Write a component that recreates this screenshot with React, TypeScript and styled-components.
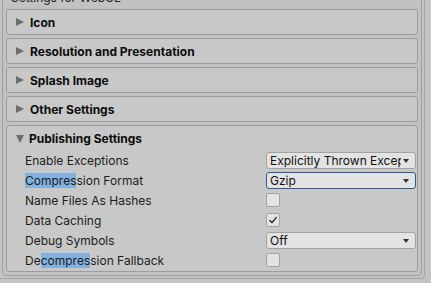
import React from "react";
import styled, { createGlobalStyle } from "styled-components";

const GlobalStyle = createGlobalStyle`
  html, body {
    margin: 0;
    padding: 0;
    background: #c3c3c3;
    overflow: hidden;
  }
  body {
    font-family: Inter, "Noto Sans", sans-serif;
    font-size: 12px;
    color: #111;
  }
`;

interface PanelProps {
  title: string;
  open?: boolean;
  children?: React.ReactNode;
}

const Panel: React.FC<PanelProps> = ({ title, open, children }) => (
  <PanelBox>
    <Header>
      <Arrow $open={open} />
      <HeaderTitle>{title}</HeaderTitle>
    </Header>
    {open && <Content>{children}</Content>}
  </PanelBox>
);

const Dropdown: React.FC<{ value: string; focused?: boolean }> = ({
  value,
  focused,
}) => (
  <Select $focused={focused}>
    <SelectValue>{value}</SelectValue>
    <SelectArrow />
  </Select>
);

const Checkbox: React.FC<{ checked?: boolean }> = ({ checked }) => (
  <CheckBox>
    {checked && (
      <svg width="10" height="10" viewBox="0 0 10 10">
        <path
          d="M1.5 5.2 L4 7.6 L8.6 2.2"
          fill="none"
          stroke="#1a1a1a"
          strokeWidth="1.3"
        />
      </svg>
    )}
  </CheckBox>
);

export default function App() {
  return (
    <>
      <GlobalStyle />
      <OuterFrame>
        <InspectorFrame>
          <Title>Settings for WebGL</Title>
          <PanelList>
            <Panel title="Icon" />
            <Panel title="Resolution and Presentation" />
            <Panel title="Splash Image" />
            <Panel title="Other Settings" />
            <Panel title="Publishing Settings" open>
              <Row>
                <Label>Enable Exceptions</Label>
                <Control>
                  <Dropdown value="Explicitly Thrown Exceptions Only" />
                </Control>
              </Row>
              <Row>
                <Label>
                  <Match>Compres</Match>sion Format
                </Label>
                <Control>
                  <Dropdown value="Gzip" focused />
                </Control>
              </Row>
              <Row>
                <Label>Name Files As Hashes</Label>
                <Control>
                  <Checkbox />
                </Control>
              </Row>
              <Row>
                <Label>Data Caching</Label>
                <Control>
                  <Checkbox checked />
                </Control>
              </Row>
              <Row>
                <Label>Debug Symbols</Label>
                <Control>
                  <Dropdown value="Off" />
                </Control>
              </Row>
              <Row>
                <Label>
                  De<Match>compres</Match>sion Fallback
                </Label>
                <Control>
                  <Checkbox />
                </Control>
              </Row>
            </Panel>
          </PanelList>
        </InspectorFrame>
      </OuterFrame>
    </>
  );
}

const OuterFrame = styled.div`
  margin: -15px 0 0 -4px;
  width: 429px;
  box-sizing: border-box;
  border: 1px solid #a6a6a6;
  border-radius: 4px;
  padding: 1px 2px 2px 5px;
`;

const InspectorFrame = styled.div`
  box-sizing: border-box;
  border: 1px solid #a0a0a0;
  border-radius: 4px;
  background: #c2c2c2;
  padding: 2px 3px 3px 3px;
`;

const Title = styled.div`
  height: 16px;
  line-height: 16px;
  padding-left: 5px;
  color: #222;
`;

const PanelList = styled.div`
  display: flex;
  flex-direction: column;
  gap: 3px;
  margin-top: 3px;
`;

const PanelBox = styled.div`
  border: 1px solid #9c9c9c;
  border-radius: 3px;
  background: #c8c8c8;
`;

const Header = styled.div`
  height: 24px;
  display: flex;
  align-items: center;
  padding-left: 9px;
  gap: 5px;
`;

const Arrow = styled.span<{ $open?: boolean }>`
  width: 0;
  height: 0;
  ${(p) =>
    p.$open
      ? `
    border-left: 4.5px solid transparent;
    border-right: 4.5px solid transparent;
    border-top: 8px solid #6d6d6d;
    margin-top: 1px;
  `
      : `
    border-top: 4.5px solid transparent;
    border-bottom: 4.5px solid transparent;
    border-left: 8px solid #6d6d6d;
    margin-right: 1px;
  `}
`;

const HeaderTitle = styled.span`
  font-weight: 700;
  font-size: 12px;
  color: #0c0c0c;
`;

const Content = styled.div`
  padding: 0 0 1px;
`;

const Row = styled.div`
  height: 20px;
  display: grid;
  grid-template-columns: 259px 150px;
  align-items: center;
`;

const Label = styled.div`
  padding-left: 18px;
  color: #1c1c1c;
  white-space: nowrap;
`;

const Match = styled.span`
  background: #82b1e0;
`;

const Control = styled.div`
  display: flex;
  align-items: center;
`;

const Select = styled.div<{ $focused?: boolean }>`
  width: 150px;
  height: 17px;
  box-sizing: border-box;
  display: flex;
  align-items: center;
  background: #e3e3e3;
  border: 1px solid ${(p) => (p.$focused ? "#2b5d96" : "#a3a3a3")};
  border-radius: 3px;
  padding-left: 3px;
`;

const SelectValue = styled.span`
  flex: 1;
  overflow: hidden;
  white-space: nowrap;
  color: #111;
`;

const SelectArrow = styled.span`
  width: 0;
  height: 0;
  margin: 1px 6px 0 2px;
  border-left: 3.5px solid transparent;
  border-right: 3.5px solid transparent;
  border-top: 4px solid #333;
`;

const CheckBox = styled.div`
  width: 14px;
  height: 14px;
  box-sizing: border-box;
  background: #e3e3e3;
  border: 1px solid #a3a3a3;
  border-radius: 2px;
  display: flex;
  align-items: center;
  justify-content: center;
`;
